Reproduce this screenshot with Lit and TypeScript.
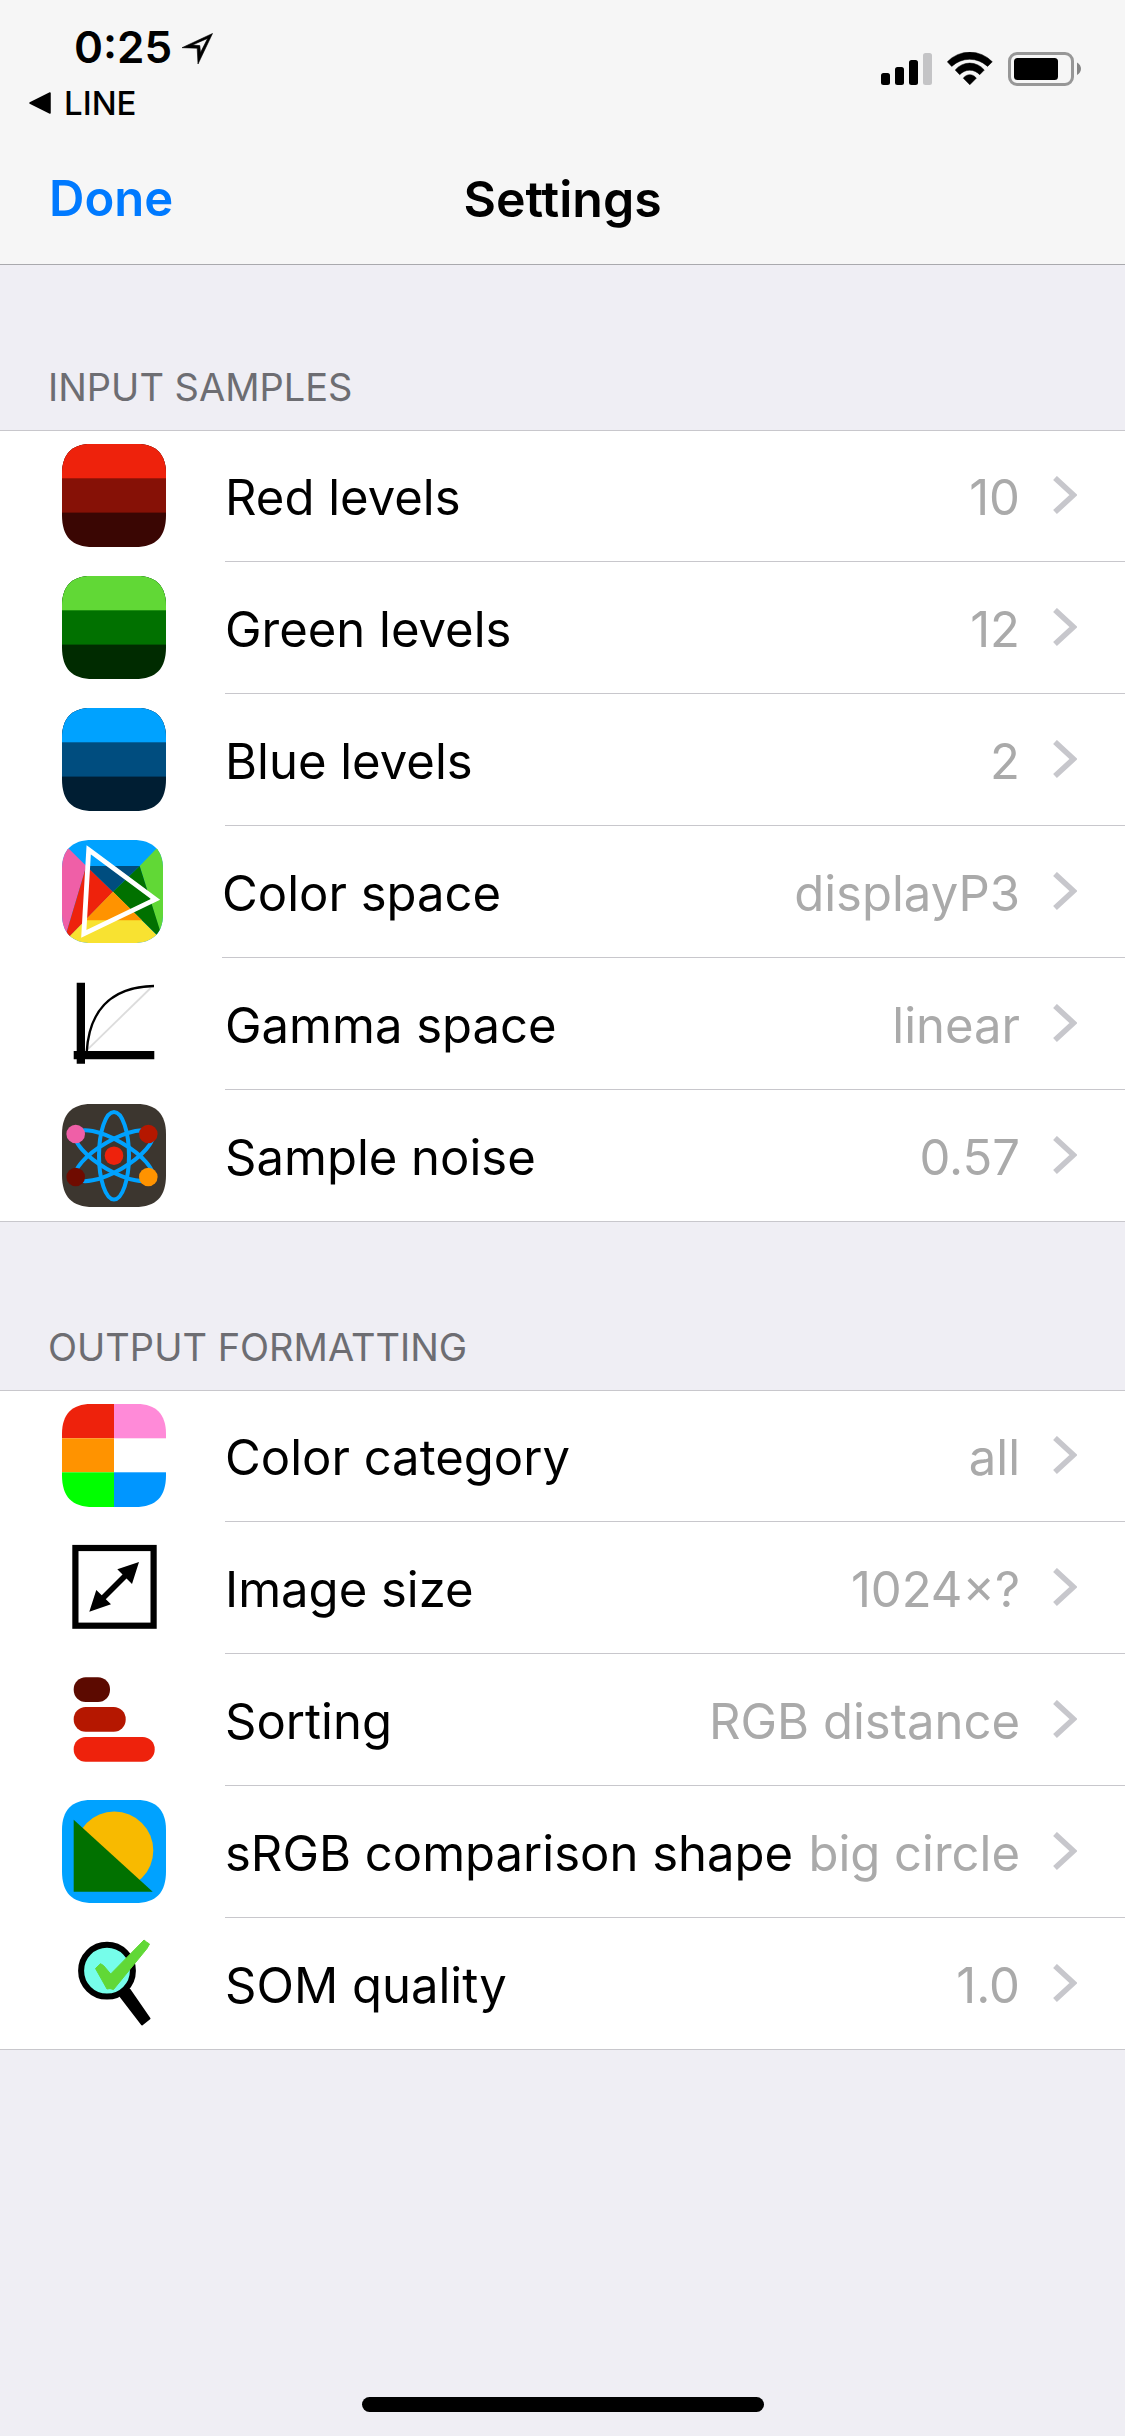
import { LitElement, html, svg, css, TemplateResult } from "lit";
import { customElement, property } from "lit/decorators.js";

interface Setting {
  icon: string;
  label: string;
  value: string;
}

interface Group {
  title: string;
  rows: Setting[];
}

const GROUPS: Group[] = [
  {
    title: "INPUT SAMPLES",
    rows: [
      { icon: "red", label: "Red levels", value: "10" },
      { icon: "green", label: "Green levels", value: "12" },
      { icon: "blue", label: "Blue levels", value: "2" },
      { icon: "space", label: "Color space", value: "displayP3" },
      { icon: "gamma", label: "Gamma space", value: "linear" },
      { icon: "noise", label: "Sample noise", value: "0.57" },
    ],
  },
  {
    title: "OUTPUT FORMATTING",
    rows: [
      { icon: "category", label: "Color category", value: "all" },
      { icon: "size", label: "Image size", value: "1024×?" },
      { icon: "sorting", label: "Sorting", value: "RGB distance" },
      { icon: "shape", label: "sRGB comparison shape", value: "big circle" },
      { icon: "quality", label: "SOM quality", value: "1.0" },
    ],
  },
];

const TILE =
  "M0 30C0 10 10 0 29 0H75C94 0 104 10 104 30V71C104 93 94 103 73 103H31C10 103 0 93 0 71Z";
const NARROW_TILE =
  "M0 29C0 10 10 0 30 0H71C91 0 101 10 101 29V74C101 93 91 103 71 103H30C10 103 0 93 0 74Z";

const bands = (top: string, middle: string, bottom: string) => svg`
  <g clip-path="url(#tile)">
    <rect width="104" height="103" fill=${bottom}/>
    <rect width="104" height="68.6" fill=${middle}/>
    <rect width="104" height="34.3" fill=${top}/>
  </g>`;

const ICONS: Record<string, TemplateResult> = {
  red: bands("#ee220c", "#861106", "#3a0603"),
  green: bands("#61d836", "#017100", "#002b00"),
  blue: bands("#00a2ff", "#004d7f", "#001e33"),
  space: svg`
    <g clip-path="url(#narrow)">
      <rect width="101" height="103" fill="#00a2ff"/>
      <path d="M-2 0L24.3 26L4 94V103H-2Z" fill="#ef5fa7"/>
      <path d="M102.700 0L77.700 26L98 92L101 103H104V0Z" fill="#61d836"/>
      <path d="M51 51.700L0 103.700H103.500Z" fill="#f8e231"/>
      <path d="M24.300 26L51 51.700L8 95.700L2 101Z" fill="#ee220c"/>
      <path d="M24.300 26H77.700L51 51.700Z" fill="#004d7f"/>
      <path d="M77.700 26L51 51.700L102 102L98.500 92Z" fill="#017100"/>
      <path d="M51 51.700L23 80.300H80Z" fill="#ff9300"/>
    </g>
    <path d="M26.700 9.800L93.500 59.300L21.800 93.800Z" fill="none" stroke="#fff" stroke-width="4.800"/>`,
  gamma: svg`
    <path d="M25.700 77.300L88.700 16" stroke="#dcdcdc" stroke-width="1.800" fill="none"/>
    <path d="M24.700 80C27 42 46 15 92 14" stroke="#000" stroke-width="2.400" fill="none"/>
    <path d="M14.700 10.700H23V91.700H14.700ZM11.700 79H92.300V87.300H11.700Z" fill="#000"/>`,
  noise: svg`
    <path d=${TILE} fill="#3c362f"/>
    <g fill="none" stroke="#00a2ff" stroke-width="4">
      <ellipse cx="52" cy="51.700" rx="15" ry="43.700"/>
      <ellipse cx="52" cy="51.700" rx="15" ry="43.700" transform="rotate(60 52 51.700)"/>
      <ellipse cx="52" cy="51.700" rx="15" ry="43.700" transform="rotate(-60 52 51.700)"/>
    </g>
    <circle cx="13.700" cy="30" r="9.300" fill="#ef5fa7"/>
    <circle cx="86.300" cy="30" r="9.300" fill="#b51700"/>
    <circle cx="13.700" cy="73" r="9.300" fill="#6f0b00"/>
    <circle cx="86.300" cy="73" r="9.300" fill="#ff9300"/>
    <circle cx="52" cy="51.700" r="9.300" fill="#ee220c"/>`,
  category: svg`
    <g clip-path="url(#tile)">
      <rect width="52" height="34.300" fill="#ee220c"/>
      <rect x="52" width="52" height="34.300" fill="#ff8ad8"/>
      <rect y="34.300" width="52" height="34" fill="#ff9300"/>
      <rect y="68.300" width="52" height="35" fill="#00ff00"/>
      <rect x="52" y="68.300" width="52" height="35" fill="#0096ff"/>
    </g>`,
  size: svg`
    <rect x="13.400" y="12" width="78.200" height="77.700" fill="none" stroke="#000" stroke-width="6.200"/>
    <path d="M38 65L66 37" stroke="#000" stroke-width="5.600"/>
    <path d="M77 26L55.300 33.300L70 48ZM27.300 75.700L34.300 54L49 68.300Z" fill="#000"/>`,
  sorting: svg`
    <rect x="11.700" y="9.200" width="36.300" height="24.800" rx="12" fill="#5c0a00"/>
    <rect x="11.700" y="39" width="52" height="24.800" rx="12" fill="#b51700"/>
    <rect x="11.700" y="69" width="81" height="24.800" rx="12" fill="#ee220c"/>`,
  shape: svg`
    <path d=${TILE} fill="#00a2ff"/>
    <circle cx="52.300" cy="50.500" r="39" fill="#f8ba00"/>
    <path d="M11.700 19.700L90.700 91.700H11.700Z" fill="#017100"/>`,
  quality: svg`
    <path d="M58.500 64.500L67.500 57.500L87.500 86.500L80 92.500Z" fill="#000" stroke="#000" stroke-width="2" stroke-linejoin="round"/>
    <circle cx="45" cy="38.700" r="25.900" fill="#76fdea" stroke="#000" stroke-width="6"/>
    <path d="M33.500 36.500L38.500 31.700L41.500 33.500L48.700 42L82 8L84.500 10L87.500 12L85 16.500L51.500 57.500L49.500 57L48 56.500L45 57Z"
      fill="#61d836" stroke="#61d836" stroke-width="1" stroke-linejoin="round"/>`,
};

@customElement("setting-row")
class SettingRow extends LitElement {
  @property({ attribute: false }) setting!: Setting;
  @property({ type: Boolean, reflect: true }) first = false;
  @property({ type: Boolean, reflect: true }) last = false;

  static styles = css`
    :host {
      display: block;
    }
    .row {
      box-sizing: border-box;
      display: flex;
      width: 100%;
      min-height: 132px;
      margin: 0;
      padding: 0 0 0 62px;
      border: 0;
      border-top: 1px solid #fff;
      background: #fff;
      color: #000;
      font: inherit;
      text-align: left;
      gap: 59px;
      cursor: pointer;
    }
    :host([first]) .row {
      border-top-color: #c8c7cc;
    }
    :host([last]) .row {
      border-bottom: 1px solid #c8c7cc;
    }
    .icon {
      flex: none;
      display: block;
      margin-top: 13px;
    }
    .body {
      flex: 1;
      min-width: 0;
      display: flex;
      align-items: center;
      padding-right: 48px;
      border-bottom: 1px solid #c8c7cc;
    }
    :host([last]) .body {
      border-bottom: 0;
    }
    .label,
    .value {
      padding-top: 3px;
      white-space: nowrap;
    }
    .label {
      flex: 1;
    }
    .value {
      margin-right: 33px;
      color: #aaa;
    }
    .chevron {
      flex: none;
      display: block;
    }
  `;

  render() {
    const { icon, label, value } = this.setting;
    const width = icon === "space" ? 101 : 104;
    return html`
      <button class="row" type="button">
        <svg class="icon" width=${width} height="103" viewBox="0 0 ${width} 103" aria-hidden="true">
          <defs>
            <clipPath id="tile"><path d=${TILE} /></clipPath>
            <clipPath id="narrow"><path d=${NARROW_TILE} /></clipPath>
          </defs>
          ${ICONS[icon]}
        </svg>
        <span class="body">
          <span class="label">${label}</span>
          <span class="value">${value}</span>
          <svg class="chevron" width="24" height="40" viewBox="0 0 24 40" aria-hidden="true">
            <path d="M2 2L20.500 19L2 36" fill="none" stroke="#c7c7cc" stroke-width="5.600" />
          </svg>
        </span>
      </button>
    `;
  }
}

@customElement("status-bar")
class StatusBar extends LitElement {
  static styles = css`
    :host {
      display: flex;
      justify-content: space-between;
      align-items: flex-start;
      box-sizing: border-box;
      min-height: 132px;
      padding: 20px 44px 0 28px;
    }
    .left {
      display: flex;
      flex-direction: column;
      align-items: flex-start;
      gap: 9px;
    }
    .clock {
      display: flex;
      align-items: center;
      gap: 9px;
      padding-left: 46px;
      font-size: 44px;
      line-height: 54px;
      font-weight: 600;
    }
    .location {
      margin-top: 4px;
    }
    .back {
      display: flex;
      align-items: center;
      gap: 12px;
      color: #000;
      text-decoration: none;
      font-size: 33px;
      line-height: 40px;
      font-weight: 500;
    }
    .right {
      display: flex;
      gap: 15px;
      padding-top: 32px;
    }
    svg {
      display: block;
    }
  `;

  render() {
    return html`
      <div class="left">
        <div class="clock">
          <span>0:25</span>
          <svg class="location" width="33" height="32" viewBox="0 0 33 32" aria-label="Location in use">
            <path
              fill="#000"
              stroke="#000"
              stroke-width="0.600"
              fill-rule="evenodd"
              d="M31.500 .5L1 14.700L16.200 15.200L17 31L31.500 .5ZM26.600 5.400L19.500 19.500L18.800 12.600L11.500 12Z"
            />
          </svg>
        </div>
        <a class="back" href="#">
          <svg width="24" height="24" viewBox="0 0 24 24" aria-hidden="true">
            <path d="M2 12L22 2V22Z" fill="#000" stroke="#000" stroke-width="1.500" stroke-linejoin="round" />
          </svg>
          <span>LINE</span>
        </a>
      </div>
      <div class="right">
        <svg width="51" height="34" viewBox="0 0 51 34" aria-label="Signal">
          <rect x="0" y="21" width="9" height="12" rx="2.500" />
          <rect x="14" y="15" width="9" height="18" rx="2.500" />
          <rect x="28" y="8" width="9" height="25" rx="2.500" />
          <rect x="42" y="1" width="9" height="32" rx="2.500" fill="#c4c4c6" />
        </svg>
        <svg width="46" height="34" viewBox="0 0 46 34" aria-label="Wi-Fi">
          <path
            stroke="#000"
            stroke-width="0.500"
            stroke-linejoin="round"
            d="M.3 9.800A31 31 0 0 1 45.300 9.800L40.600 14.400A26.200 26.200 0 0 0 4.700 14.400ZM8.200 18A18.800 18.800 0 0 1 37.300 18L32.700 22.700A13.400 13.400 0 0 0 12.700 22.700ZM16.300 26.200A7.800 7.800 0 0 1 29.300 26.200L22.800 32.800Z"
          />
        </svg>
        <svg width="73" height="34" viewBox="0 0 73 34" aria-label="Battery">
          <rect x="1.500" y="1.500" width="63" height="31" rx="7.500" fill="none" stroke="#979797" stroke-width="3" />
          <rect x="6" y="6" width="44" height="22" rx="3.500" />
          <path d="M69 10.500C74.300 13 74.300 20.500 69 23Z" fill="#858585" />
        </svg>
      </div>
    `;
  }
}

@customElement("app-root")
class AppRoot extends LitElement {
  static styles = css`
    :host {
      display: flex;
      flex-direction: column;
      min-height: 100vh;
      background: #efeef4;
      color: #000;
      font-family: Inter, "Liberation Sans", sans-serif;
      font-size: 49px;
      line-height: 60px;
    }
    .header {
      background: #f6f6f6;
      border-bottom: 1px solid #a9a9ad;
    }
    .nav {
      box-sizing: border-box;
      display: grid;
      grid-template-columns: 1fr auto 1fr;
      align-items: center;
      min-height: 132px;
      padding: 2px 49px 0;
    }
    .done {
      justify-self: start;
      margin: 0;
      padding: 0;
      border: 0;
      background: none;
      color: #007aff;
      font: inherit;
      font-weight: 600;
      cursor: pointer;
    }
    .title {
      margin: 0;
      font-size: 50px;
      line-height: 60px;
      font-weight: 600;
    }
    .groups {
      display: flex;
      flex-direction: column;
      gap: 3px;
    }
    .heading {
      margin: 0;
      padding: 98px 48px 19px;
      color: #6d6d72;
      font-size: 38px;
      line-height: 48px;
      font-weight: 400;
    }
    .list {
      list-style: none;
      margin: 0;
      padding: 0;
    }
    .home {
      width: 402px;
      height: 15px;
      margin: auto auto 24px;
      border-radius: 8px;
      background: #000;
    }
  `;

  render() {
    return html`
      <header class="header">
        <status-bar></status-bar>
        <nav class="nav">
          <button class="done" type="button">Done</button>
          <h1 class="title">Settings</h1>
        </nav>
      </header>
      <main class="groups">
        ${GROUPS.map(
          (group) => html`
            <section>
              <h2 class="heading">${group.title}</h2>
              <ul class="list">
                ${group.rows.map(
                  (row, i) => html`
                    <li>
                      <setting-row
                        .setting=${row}
                        ?first=${i === 0}
                        ?last=${i === group.rows.length - 1}
                      ></setting-row>
                    </li>
                  `
                )}
              </ul>
            </section>
          `
        )}
      </main>
      <div class="home"></div>
    `;
  }
}
